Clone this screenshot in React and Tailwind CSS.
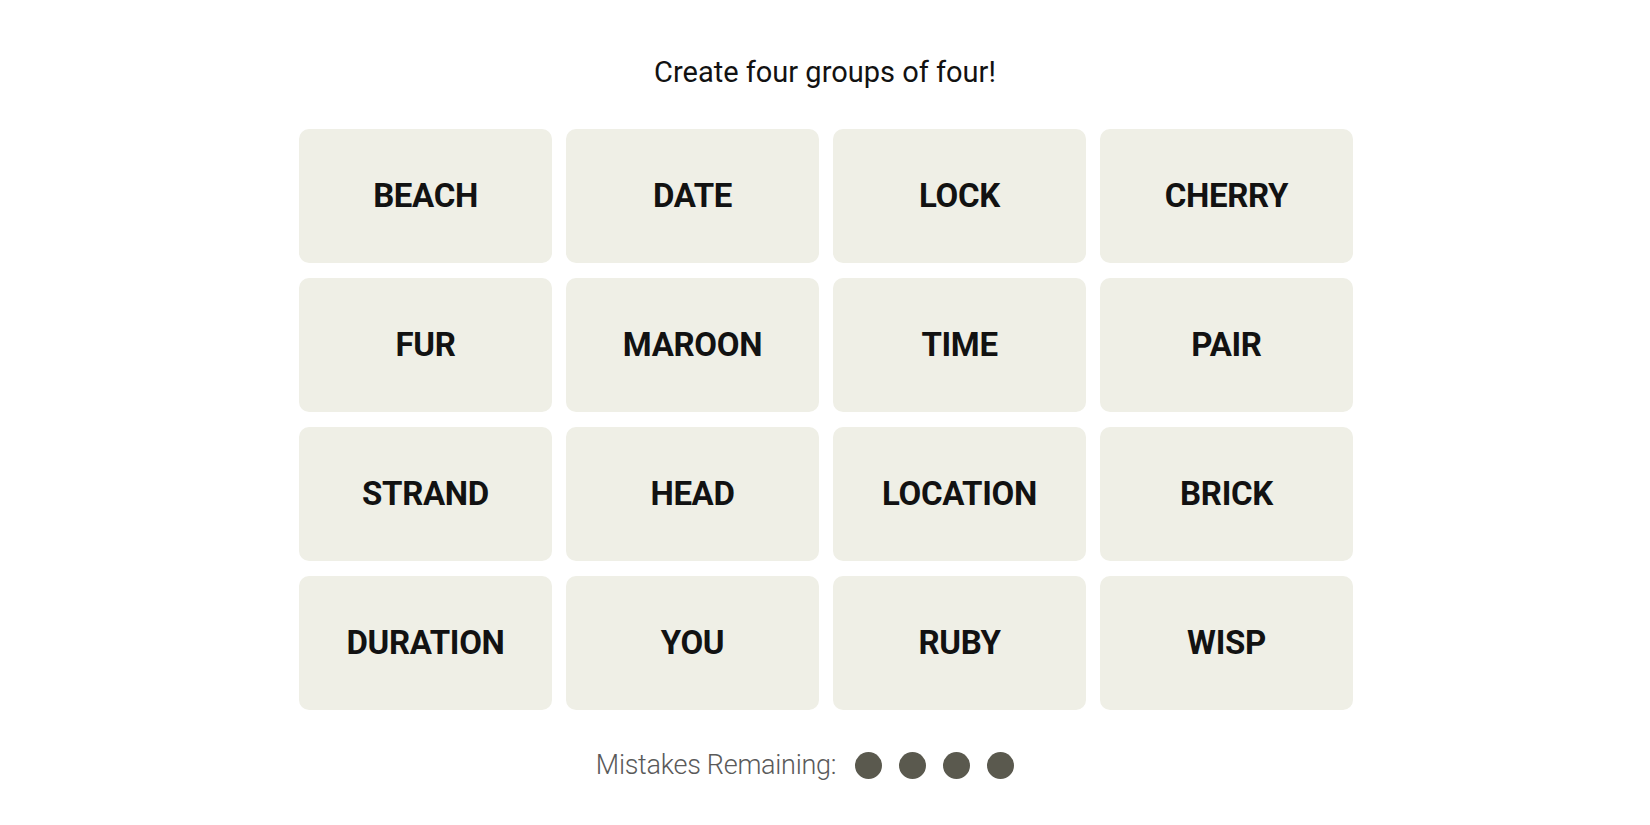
import React from "react";

const WORDS = [
  "BEACH", "DATE", "LOCK", "CHERRY",
  "FUR", "MAROON", "TIME", "PAIR",
  "STRAND", "HEAD", "LOCATION", "BRICK",
  "DURATION", "YOU", "RUBY", "WISP",
];

export default function App() {
  return (
    <div
      className="w-full min-h-[825px] bg-white flex flex-col items-center pt-[55px]"
      style={{ fontFamily: "Roboto, 'Liberation Sans', sans-serif" }}
    >
      <h1 className="text-[29px] leading-[34px] font-normal text-[#121212]">
        Create four groups of four!
      </h1>
      <div className="mt-[40px] ml-[2px] grid grid-cols-[repeat(4,253px)] auto-rows-[134px] gap-x-[14px] gap-y-[15px]">
        {WORDS.map((w) => (
          <button
            key={w}
            className="rounded-[10px] bg-[#efefe6] flex items-center justify-center text-[33px] font-bold text-[#121212] tracking-[-0.01em] uppercase"
          >
            {w}
          </button>
        ))}
      </div>
      <div className="mt-[38px] flex items-center h-[34px] pr-[40px]">
        <span className="text-[27px] leading-[34px] font-light text-[#5a5a5a] tracking-[-0.01em]">
          Mistakes Remaining:
        </span>
        <div className="flex items-center gap-[17px] ml-[19px]">
          {[0, 1, 2, 3].map((i) => (
            <span key={i} className="block w-[27px] h-[27px] rounded-full bg-[#5a594e]" />
          ))}
        </div>
      </div>
    </div>
  );
}
